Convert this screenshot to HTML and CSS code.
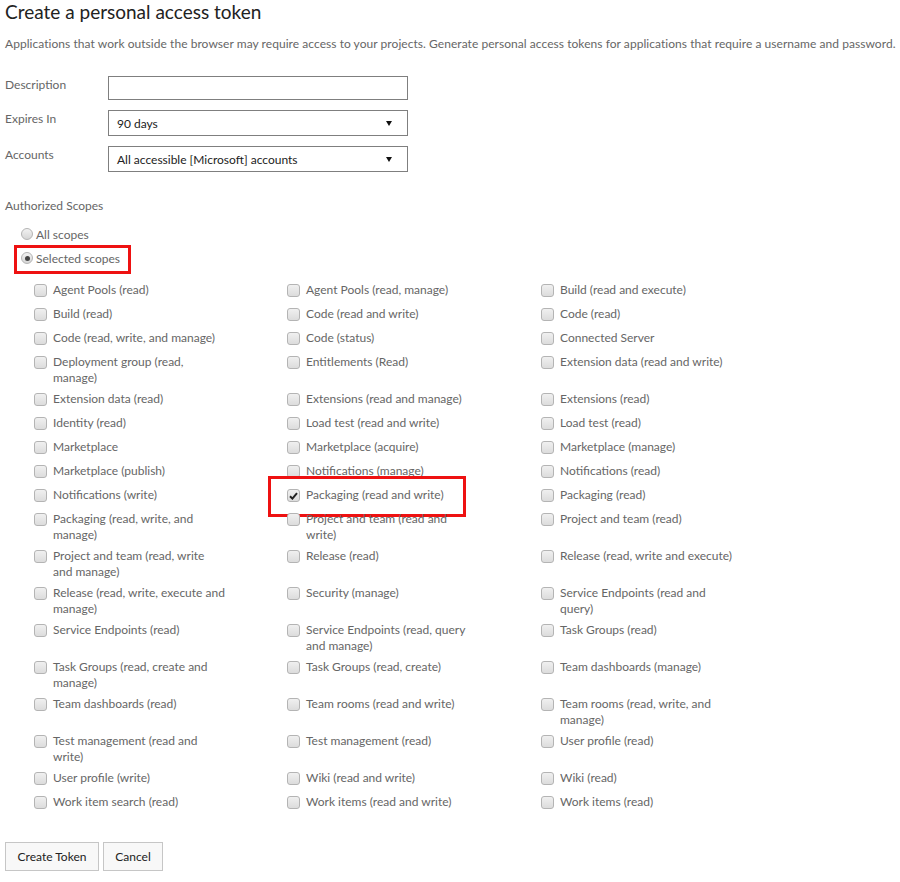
FILE: index.html
```html
<!DOCTYPE html>
<html lang="en">
<head>
<meta charset="utf-8">
<title>Create a personal access token</title>
<link rel="stylesheet" href="styles.css">
</head>
<body>
<div class="page">
  <h1 class="title">Create a personal access token</h1>
  <p class="intro">Applications that work outside the browser may require access to your projects. Generate personal access tokens for applications that require a username and password.</p>

  <div class="form">
    <div class="form-row">
      <span class="label">Description</span>
      <div class="textbox"></div>
    </div>
    <div class="form-row">
      <span class="label">Expires In</span>
      <div class="select"><span>90 days</span><svg class="arrow" width="6" height="5" viewBox="0 0 6 5"><polygon points="0,0 6,0 3,5" fill="#111"/></svg></div>
    </div>
    <div class="form-row">
      <span class="label">Accounts</span>
      <div class="select"><span>All accessible [Microsoft] accounts</span><svg class="arrow" width="6" height="5" viewBox="0 0 6 5"><polygon points="0,0 6,0 3,5" fill="#111"/></svg></div>
    </div>
  </div>

  <div class="section-title">Authorized Scopes</div>
  <div class="radios">
    <div class="radio-item"><span class="radio"></span><span>All scopes</span></div>
    <div class="radio-item highlighted"><span class="radio on"></span><span>Selected scopes</span><span class="hl hl-radio"></span></div>
  </div>

  <div class="scopes">
    <div class="scope"><span class="cb"></span><span class="txt">Agent Pools (read)</span></div>
    <div class="scope"><span class="cb"></span><span class="txt">Agent Pools (read, manage)</span></div>
    <div class="scope"><span class="cb"></span><span class="txt">Build (read and execute)</span></div>

    <div class="scope"><span class="cb"></span><span class="txt">Build (read)</span></div>
    <div class="scope"><span class="cb"></span><span class="txt">Code (read and write)</span></div>
    <div class="scope"><span class="cb"></span><span class="txt">Code (read)</span></div>

    <div class="scope"><span class="cb"></span><span class="txt">Code (read, write, and manage)</span></div>
    <div class="scope"><span class="cb"></span><span class="txt">Code (status)</span></div>
    <div class="scope"><span class="cb"></span><span class="txt">Connected Server</span></div>

    <div class="scope"><span class="cb"></span><span class="txt">Deployment group (read,<br>manage)</span></div>
    <div class="scope"><span class="cb"></span><span class="txt">Entitlements (Read)</span></div>
    <div class="scope"><span class="cb"></span><span class="txt">Extension data (read and write)</span></div>

    <div class="scope"><span class="cb"></span><span class="txt">Extension data (read)</span></div>
    <div class="scope"><span class="cb"></span><span class="txt">Extensions (read and manage)</span></div>
    <div class="scope"><span class="cb"></span><span class="txt">Extensions (read)</span></div>

    <div class="scope"><span class="cb"></span><span class="txt">Identity (read)</span></div>
    <div class="scope"><span class="cb"></span><span class="txt">Load test (read and write)</span></div>
    <div class="scope"><span class="cb"></span><span class="txt">Load test (read)</span></div>

    <div class="scope"><span class="cb"></span><span class="txt">Marketplace</span></div>
    <div class="scope"><span class="cb"></span><span class="txt">Marketplace (acquire)</span></div>
    <div class="scope"><span class="cb"></span><span class="txt">Marketplace (manage)</span></div>

    <div class="scope"><span class="cb"></span><span class="txt">Marketplace (publish)</span></div>
    <div class="scope"><span class="cb"></span><span class="txt">Notifications (manage)</span></div>
    <div class="scope"><span class="cb"></span><span class="txt">Notifications (read)</span></div>

    <div class="scope"><span class="cb"></span><span class="txt">Notifications (write)</span></div>
    <div class="scope"><span class="cb checked"><svg width="9" height="8" viewBox="0 0 9 8"><path d="M1 4.2 L3.4 6.6 L8 1.2" fill="none" stroke="#222" stroke-width="2"/></svg></span><span class="txt">Packaging (read and write)</span><span class="hl hl-scope"></span></div>
    <div class="scope"><span class="cb"></span><span class="txt">Packaging (read)</span></div>

    <div class="scope"><span class="cb"></span><span class="txt">Packaging (read, write, and<br>manage)</span></div>
    <div class="scope"><span class="cb"></span><span class="txt">Project and team (read and<br>write)</span></div>
    <div class="scope"><span class="cb"></span><span class="txt">Project and team (read)</span></div>

    <div class="scope"><span class="cb"></span><span class="txt">Project and team (read, write<br>and manage)</span></div>
    <div class="scope"><span class="cb"></span><span class="txt">Release (read)</span></div>
    <div class="scope"><span class="cb"></span><span class="txt">Release (read, write and execute)</span></div>

    <div class="scope"><span class="cb"></span><span class="txt">Release (read, write, execute and<br>manage)</span></div>
    <div class="scope"><span class="cb"></span><span class="txt">Security (manage)</span></div>
    <div class="scope"><span class="cb"></span><span class="txt">Service Endpoints (read and<br>query)</span></div>

    <div class="scope"><span class="cb"></span><span class="txt">Service Endpoints (read)</span></div>
    <div class="scope"><span class="cb"></span><span class="txt">Service Endpoints (read, query<br>and manage)</span></div>
    <div class="scope"><span class="cb"></span><span class="txt">Task Groups (read)</span></div>

    <div class="scope"><span class="cb"></span><span class="txt">Task Groups (read, create and<br>manage)</span></div>
    <div class="scope"><span class="cb"></span><span class="txt">Task Groups (read, create)</span></div>
    <div class="scope"><span class="cb"></span><span class="txt">Team dashboards (manage)</span></div>

    <div class="scope"><span class="cb"></span><span class="txt">Team dashboards (read)</span></div>
    <div class="scope"><span class="cb"></span><span class="txt">Team rooms (read and write)</span></div>
    <div class="scope"><span class="cb"></span><span class="txt">Team rooms (read, write, and<br>manage)</span></div>

    <div class="scope"><span class="cb"></span><span class="txt">Test management (read and<br>write)</span></div>
    <div class="scope"><span class="cb"></span><span class="txt">Test management (read)</span></div>
    <div class="scope"><span class="cb"></span><span class="txt">User profile (read)</span></div>

    <div class="scope"><span class="cb"></span><span class="txt">User profile (write)</span></div>
    <div class="scope"><span class="cb"></span><span class="txt">Wiki (read and write)</span></div>
    <div class="scope"><span class="cb"></span><span class="txt">Wiki (read)</span></div>

    <div class="scope"><span class="cb"></span><span class="txt">Work item search (read)</span></div>
    <div class="scope"><span class="cb"></span><span class="txt">Work items (read and write)</span></div>
    <div class="scope"><span class="cb"></span><span class="txt">Work items (read)</span></div>
  </div>

  <div class="buttons">
    <button class="btn btn-create" type="button">Create Token</button>
    <button class="btn btn-cancel" type="button">Cancel</button>
  </div>
</div>
</body>
</html>
```

FILE: styles.css
```css
html, body {
  margin: 0;
  padding: 0;
  background: #ffffff;
}

body {
  font-family: "Segoe UI", Lato, "Open Sans", sans-serif;
  font-size: 12px;
  color: #666666;
}

.page {
  padding: 0 5px;
}

.title {
  margin: 0;
  font-size: 19px;
  font-weight: 400;
  line-height: 24px;
  color: #222222;
}

.intro {
  margin: 12px 0 0;
  line-height: 16px;
  white-space: nowrap;
  letter-spacing: 0.05px;
}

.form {
  margin-top: 24px;
  display: flex;
  flex-direction: column;
  gap: 10px;
}

.form-row {
  display: flex;
  align-items: flex-start;
}

.label {
  width: 103px;
  line-height: 16px;
  padding-top: 1px;
}

.textbox {
  width: 300px;
  height: 24px;
  box-sizing: border-box;
  border: 1px solid #7f7f7f;
}

.select {
  width: 300px;
  height: 26px;
  box-sizing: border-box;
  border: 1px solid #7f7f7f;
  display: flex;
  align-items: center;
  justify-content: space-between;
  padding: 0 15px 0 8px;
  color: #222222;
}

.select span {
  line-height: 16px;
  padding-top: 1px;
}

.arrow {
  display: block;
  margin-top: 1px;
}

.section-title {
  margin-top: 26px;
  line-height: 16px;
}

.radios {
  margin-top: 13px;
  padding-left: 16px;
  display: flex;
  flex-direction: column;
  gap: 8px;
}

.radio-item {
  position: relative;
  display: flex;
  align-items: center;
  line-height: 16px;
}

.radio {
  width: 12px;
  height: 12px;
  box-sizing: border-box;
  border-radius: 50%;
  border: 1px solid #b4b4b4;
  background: linear-gradient(#f2f2f2, #d6d6d6);
  margin-right: 3px;
  margin-top: -2px;
  position: relative;
}

.radio.on::after {
  content: "";
  position: absolute;
  left: 2.5px;
  top: 2.5px;
  width: 5px;
  height: 5px;
  border-radius: 50%;
  background: #444444;
}

.hl {
  position: absolute;
  box-sizing: border-box;
  border: 3px solid #ee1111;
  pointer-events: none;
}

.hl-radio {
  left: -7px;
  top: -6px;
  width: 117px;
  height: 29px;
}

.scopes {
  margin-top: 15px;
  padding-left: 29px;
  display: grid;
  grid-template-columns: 253px 254px 254px;
  row-gap: 5px;
}

.scope {
  position: relative;
  display: flex;
  align-items: flex-start;
  min-height: 19px;
}

.cb {
  flex: none;
  width: 13px;
  height: 13px;
  box-sizing: border-box;
  margin-top: 2px;
  margin-right: 6px;
  border: 1px solid #b4b4b4;
  border-radius: 3px;
  background: linear-gradient(#f0f0f0, #dcdcdc);
  display: flex;
  align-items: center;
  justify-content: center;
}

.cb svg {
  display: block;
}

.txt {
  line-height: 16px;
  white-space: nowrap;
}

.hl-scope {
  left: -19px;
  top: -11px;
  width: 198px;
  height: 41px;
}

.buttons {
  margin-top: 29px;
  display: flex;
  gap: 4px;
}

.btn {
  font-family: inherit;
  font-size: 12px;
  color: #222222;
  background: #f8f8f8;
  border: 1px solid #c6c6c6;
  height: 29px;
  margin: 0;
  padding: 0;
  cursor: pointer;
}

.btn-create {
  width: 94px;
}

.btn-cancel {
  width: 60px;
}
```
